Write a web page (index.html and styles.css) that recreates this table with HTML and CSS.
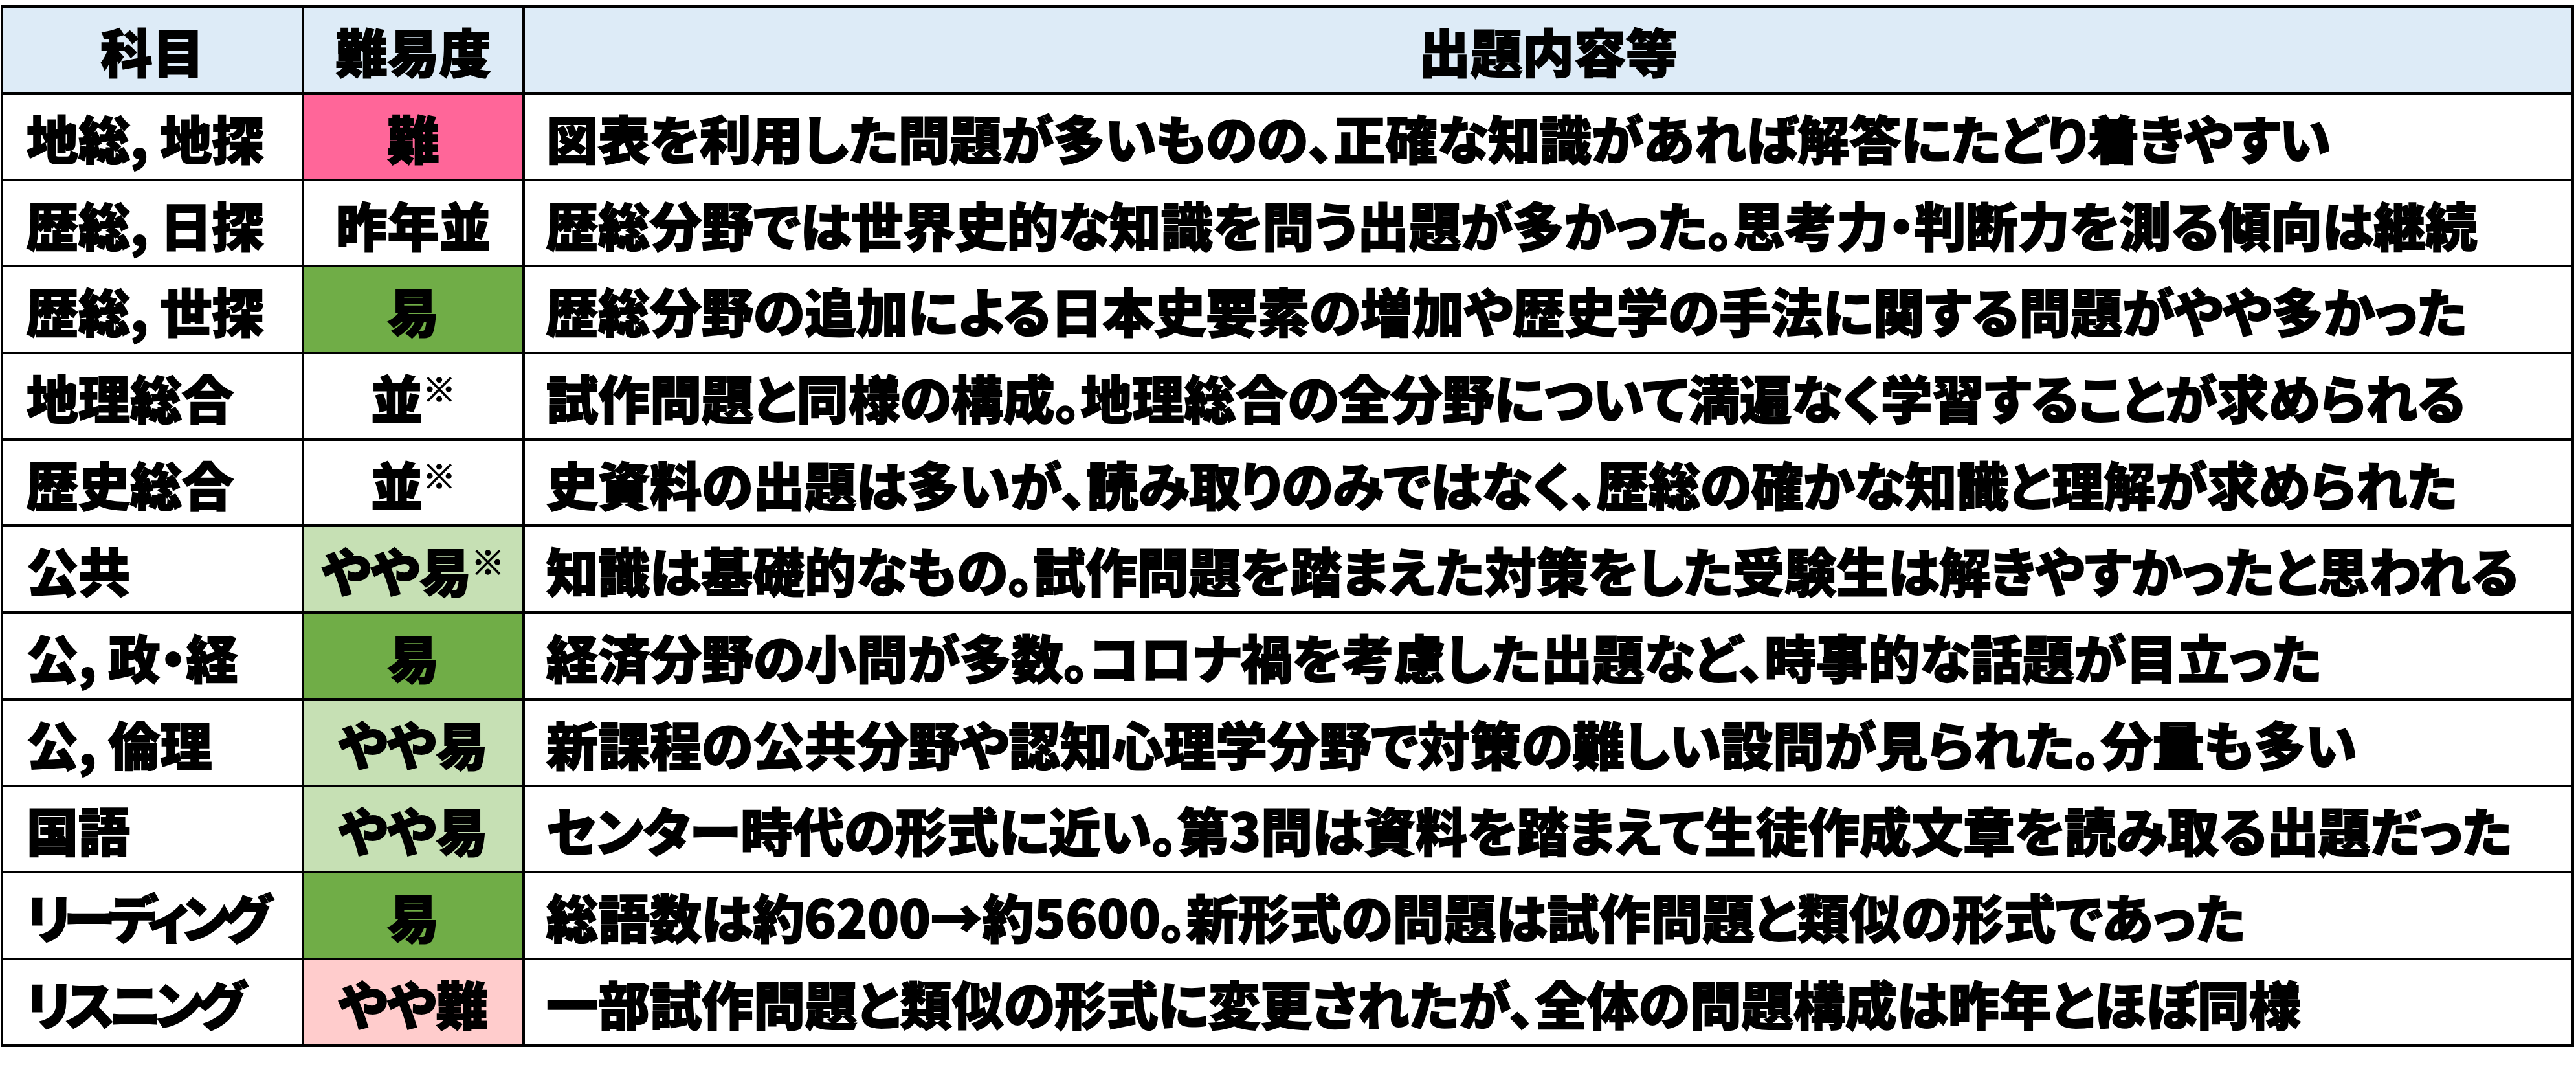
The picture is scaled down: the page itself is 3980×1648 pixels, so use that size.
FILE: index.html
```html
<!DOCTYPE html>
<html lang="ja">
<head>
<meta charset="utf-8">
<title>難易度一覧</title>
<link rel="stylesheet" href="styles.css">
</head>
<body>
<table class="grid">
  <colgroup>
    <col class="col-subject">
    <col class="col-level">
    <col class="col-note">
  </colgroup>
  <thead>
    <tr class="head-row">
      <th>科目</th>
      <th>難易度</th>
      <th>出題内容等</th>
    </tr>
  </thead>
  <tbody>
    <tr>
      <td class="subject">地総, 地探</td>
      <td class="level hard">難</td>
      <td class="note">図表を利用した問題が多いものの、正確な知識があれば解答にたどり着きやすい</td>
    </tr>
    <tr>
      <td class="subject">歴総, 日探</td>
      <td class="level">昨年並</td>
      <td class="note">歴総分野では世界史的な知識を問う出題が多かった。思考力・判断力を測る傾向は継続</td>
    </tr>
    <tr>
      <td class="subject">歴総, 世探</td>
      <td class="level easy">易</td>
      <td class="note">歴総分野の追加による日本史要素の増加や歴史学の手法に関する問題がやや多かった</td>
    </tr>
    <tr>
      <td class="subject">地理総合</td>
      <td class="level">並<span class="mark">※</span></td>
      <td class="note">試作問題と同様の構成。地理総合の全分野について満遍なく学習することが求められる</td>
    </tr>
    <tr>
      <td class="subject">歴史総合</td>
      <td class="level">並<span class="mark">※</span></td>
      <td class="note">史資料の出題は多いが、読み取りのみではなく、歴総の確かな知識と理解が求められた</td>
    </tr>
    <tr>
      <td class="subject">公共</td>
      <td class="level fairly-easy">やや易<span class="mark">※</span></td>
      <td class="note">知識は基礎的なもの。試作問題を踏まえた対策をした受験生は解きやすかったと思われる</td>
    </tr>
    <tr>
      <td class="subject">公, 政・経</td>
      <td class="level easy">易</td>
      <td class="note">経済分野の小問が多数。コロナ禍を考慮した出題など、時事的な話題が目立った</td>
    </tr>
    <tr>
      <td class="subject">公, 倫理</td>
      <td class="level fairly-easy">やや易</td>
      <td class="note">新課程の公共分野や認知心理学分野で対策の難しい設問が見られた。分量も多い</td>
    </tr>
    <tr>
      <td class="subject">国語</td>
      <td class="level fairly-easy">やや易</td>
      <td class="note">センター時代の形式に近い。第3問は資料を踏まえて生徒作成文章を読み取る出題だった</td>
    </tr>
    <tr>
      <td class="subject katakana-long">リーディング</td>
      <td class="level easy">易</td>
      <td class="note">総語数は約6200→約5600。新形式の問題は試作問題と類似の形式であった</td>
    </tr>
    <tr>
      <td class="subject katakana">リスニング</td>
      <td class="level fairly-hard">やや難</td>
      <td class="note">一部試作問題と類似の形式に変更されたが、全体の問題構成は昨年とほぼ同様</td>
    </tr>
  </tbody>
</table>
</body>
</html>
```
FILE: styles.css
```css
html, body {
  margin: 0;
  padding: 0;
  background: #ffffff;
}

body {
  padding: 8px 0 0 1px;
  font-family: "Noto Sans CJK JP", "Noto Sans CJK SC", sans-serif;
  color: #000000;
}

.grid {
  border-collapse: collapse;
  table-layout: fixed;
  width: 3976px;
  font-size: 80px;
  font-weight: 900;
  font-feature-settings: "palt" 1;
  line-height: 1.2;
  -webkit-text-stroke: 2px #000000;
}

.col-subject { width: 465px; }
.col-level { width: 341px; }
.col-note { width: 3166px; }

.grid th,
.grid td {
  border: 4px solid #000000;
  padding: 0;
  vertical-align: middle;
  white-space: nowrap;
  overflow: hidden;
}

.head-row {
  height: 134px;
}

.head-row th {
  background: #ddebf7;
  text-align: center;
  font-weight: 900;
}

.grid tbody tr {
  height: 133.7px;
}

.grid td.subject {
  text-align: left;
  padding-left: 36px;
}

.grid td.katakana {
  letter-spacing: -8px;
}

.grid td.katakana-long {
  letter-spacing: -10px;
}

.level {
  text-align: center;
}

.grid td.note {
  text-align: left;
  padding-left: 33px;
}

.hard { background: #ff6699; }
.easy { background: #70ad47; }
.fairly-easy { background: #c6e0b4; }
.fairly-hard { background: #ffcccc; }

.mark {
  font-size: 0.64em;
  vertical-align: 0.5em;
  line-height: 1;
  -webkit-text-stroke: 1.5px #000000;
}
```
